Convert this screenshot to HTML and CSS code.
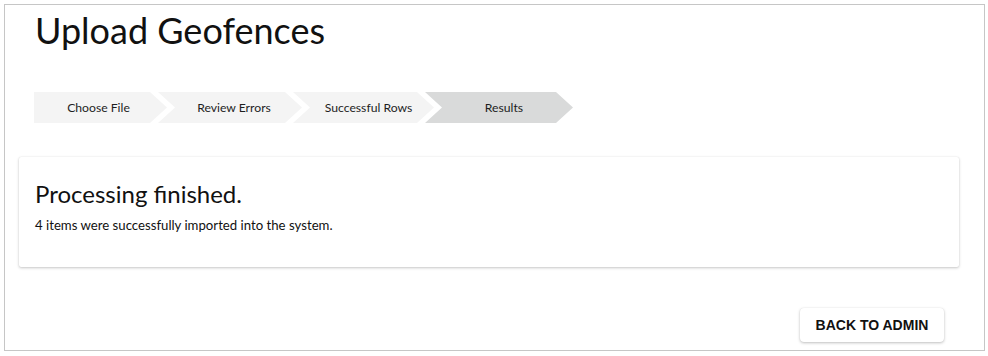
FILE: index.html
```html
<!DOCTYPE html>
<html lang="en">
<head>
<meta charset="utf-8">
<title>Upload Geofences</title>
<link rel="stylesheet" href="styles.css">
</head>
<body>
<div class="frame">
  <div class="content">
    <h1 class="page-title">Upload Geofences</h1>
    <ol class="steps">
      <li class="step step-first">Choose File</li>
      <li class="step step-review">Review Errors</li>
      <li class="step step-success">Successful Rows</li>
      <li class="step step-results step-active">Results</li>
    </ol>
    <section class="card">
      <h2 class="card-title">Processing finished.</h2>
      <p class="card-text">4 items were successfully imported into the system.</p>
    </section>
    <div class="actions">
      <button class="btn" type="button">BACK TO ADMIN</button>
    </div>
  </div>
</div>
</body>
</html>
```

FILE: styles.css
```css
* { box-sizing: border-box; }

html, body {
  margin: 0;
  padding: 0;
  background: #ffffff;
}

body {
  font-family: Lato, "Noto Sans", sans-serif;
  color: #111111;
}

.frame {
  margin: 4px 0 0 4px;
  width: 981px;
  height: 347px;
  border: 1px solid #c6c6c6;
  background: #ffffff;
}

.content {
  margin-left: 14px;
  width: 940px;
  display: flex;
  flex-direction: column;
}

.page-title {
  margin: 4px 0 0 16px;
  font-size: 36px;
  font-weight: 400;
  line-height: 43px;
  color: #111111;
}

.steps {
  list-style: none;
  margin: 40px 0 0 15px;
  padding: 0;
  display: flex;
  height: 31px;
}

.step {
  height: 31px;
  display: flex;
  align-items: center;
  justify-content: center;
  font-size: 12.2px;
  color: #1e1e1e;
  background: #f4f4f4;
  margin-left: -9px;
  padding-left: 10px;
  clip-path: polygon(0 0, calc(100% - 17px) 0, 100% 50%, calc(100% - 17px) 100%, 0 100%, 17px 50%);
}

.step-first {
  margin-left: 0;
  width: 133px;
  padding-left: 0;
  padding-right: 4px;
  clip-path: polygon(0 0, calc(100% - 17px) 0, 100% 50%, calc(100% - 17px) 100%, 0 100%);
}

.step-review { width: 144px; padding-left: 8px; }
.step-success { width: 141px; padding-left: 10px; }
.step-results { width: 148px; padding-left: 10px; }

.step-active {
  background: #d9dada;
}

.card {
  margin-top: 34px;
  height: 110px;
  background: #ffffff;
  border-radius: 2px;
  box-shadow: 0 1px 3px rgba(0, 0, 0, 0.22), 0 0 1px rgba(0, 0, 0, 0.12);
  padding: 23px 16px 0 16px;
}

.card-title {
  margin: 0;
  font-size: 24px;
  font-weight: 400;
  line-height: 28px;
  color: #111111;
}

.card-text {
  margin: 9px 0 0 0;
  font-size: 13.2px;
  line-height: 16px;
  color: #111111;
}

.actions {
  display: flex;
  justify-content: flex-end;
  padding-right: 15px;
  margin-top: 41px;
}

.btn {
  width: 144px;
  height: 34px;
  border: none;
  border-radius: 4px;
  background: #ffffff;
  box-shadow: 0 1px 3px rgba(0, 0, 0, 0.25), 0 0 1px rgba(0, 0, 0, 0.1);
  font-family: "Liberation Sans", Arial, sans-serif;
  font-weight: 700;
  font-size: 14px;
  color: #111111;
  padding: 0;
  cursor: pointer;
}
```
